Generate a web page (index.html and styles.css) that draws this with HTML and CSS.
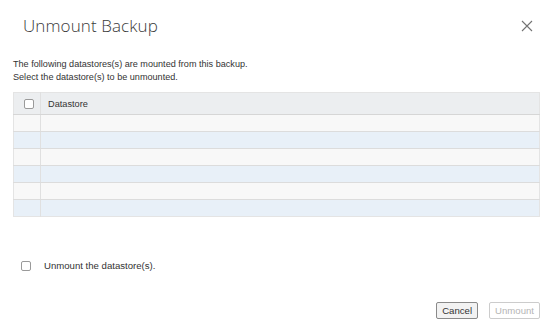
FILE: index.html
```html
<!DOCTYPE html>
<html lang="en">
<head>
  <meta charset="UTF-8">
  <title>Unmount Backup</title>
  <link rel="stylesheet" href="styles.css">
</head>
<body>
  <div class="modal">
    <!-- Header -->
    <div class="modal-header">
      <h3 class="modal-title">Unmount Backup</h3>
      <button class="close-btn" aria-label="Close">
        <svg width="12" height="12" viewBox="0 0 12 12">
          <path d="M1 1 L11 11 M11 1 L1 11" stroke="#737373" stroke-width="1.1" fill="none"/>
        </svg>
      </button>
    </div>

    <!-- Body -->
    <div class="modal-body">
      <p class="intro">The following datastores(s) are mounted from this backup.<br>Select the datastore(s) to be unmounted.</p>

      <table class="grid">
        <thead>
          <tr>
            <th class="col-select"><span class="checkbox"></span></th>
            <th>Datastore</th>
          </tr>
        </thead>
        <tbody id="rows"></tbody>
      </table>

      <label class="confirm">
        <span class="checkbox"></span>
        <span class="confirm-label">Unmount the datastore(s).</span>
      </label>
    </div>

    <!-- Footer -->
    <div class="modal-footer">
      <button class="btn">Cancel</button>
      <button class="btn" disabled>Unmount</button>
    </div>
  </div>

  <script>
    // Empty placeholder rows
    var rows = document.getElementById('rows');
    for (var i = 0; i < 6; i++) {
      var tr = document.createElement('tr');
      tr.innerHTML = '<td class="col-select"></td><td></td>';
      rows.appendChild(tr);
    }
  </script>
</body>
</html>
```

FILE: styles.css
```css
body {
  margin: 0;
  background-color: #ffffff;
  font-family: "Liberation Sans", Arial, sans-serif;
  color: #333333;
}

.modal {
  width: 550px;
  height: 333px;
  display: flex;
  flex-direction: column;
}

.modal-header {
  display: flex;
  justify-content: space-between;
  align-items: center;
  padding: 13px 16px 0 23px;
  height: 24px;
}

.modal-title {
  margin: 0;
  font-family: "Open Sans", sans-serif;
  font-weight: 300;
  font-size: 17px;
  color: #3a3a3a;
  letter-spacing: 0.1px;
}

.close-btn {
  background: none;
  border: none;
  padding: 0;
  width: 14px;
  height: 14px;
  display: flex;
  align-items: center;
  justify-content: center;
  margin-top: 2px;
}

.modal-body {
  padding: 0 10px 0 13px;
  flex: 1;
}

.intro {
  margin: 21px 0 8px;
  font-size: 9.1px;
  line-height: 13px;
  color: #333333;
}

.grid {
  width: 100%;
  border-collapse: collapse;
  border: 1px solid #e4e4e4;
  font-size: 9.2px;
}

.grid th {
  background-color: #eceef0;
  height: 21px;
  padding: 0 7px;
  text-align: left;
  font-weight: normal;
  color: #333333;
  border-bottom: 1px solid #d6d6d6;
}

.grid td {
  height: 16px;
  padding: 0;
  border-bottom: 1px solid #dcdcdc;
}

.grid tbody tr:nth-child(odd) {
  background-color: #f8f8f8;
}

.grid tbody tr:nth-child(even) {
  background-color: #e8f0f8;
}

.grid tbody tr:last-child td {
  border-bottom: none;
}

.grid .col-select {
  width: 10px;
  border-right: 1px solid #e0e0e0;
  padding: 0 6px 0 10px;
}

.checkbox {
  display: block;
  width: 8px;
  height: 8px;
  border: 1px solid #9a9a9a;
  border-radius: 2px;
  background-color: #ffffff;
}

.confirm {
  display: flex;
  align-items: center;
  margin: 43px 0 0 8px;
}

.confirm-label {
  margin-left: 13px;
  font-size: 9.6px;
  color: #333333;
}

.modal-footer {
  display: flex;
  justify-content: flex-end;
  gap: 11px;
  padding: 0 10px 14px 0;
}

.btn {
  height: 17px;
  padding: 0 5px;
  font-family: "Liberation Sans", Arial, sans-serif;
  font-size: 9.6px;
  color: #333333;
  background-color: #f2f2f2;
  border: 1px solid #8a8a8a;
  border-radius: 2px;
}

.btn:disabled {
  color: #b5b5b5;
  background-color: #ffffff;
  border-color: #cccccc;
}
```
